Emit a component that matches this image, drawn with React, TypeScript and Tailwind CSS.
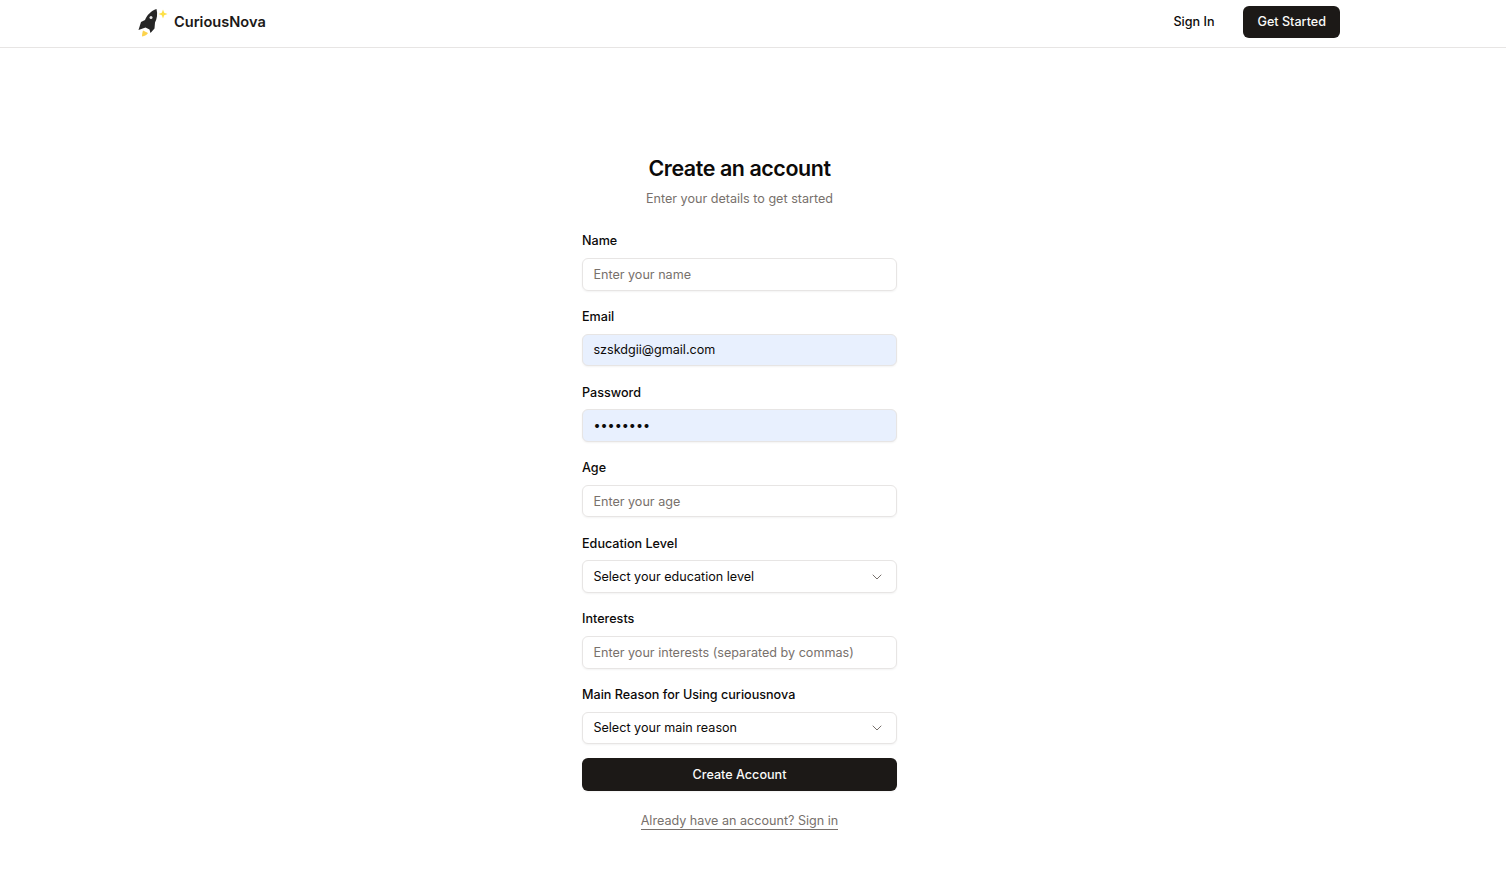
import { ChevronDown } from "lucide-react";

const inputBase =
  "h-[32.6px] w-full rounded-md border border-[#e7e5e4] px-[10.4px] text-[12.6px] shadow-[0_1px_2px_rgba(0,0,0,0.05)] outline-none";

const Logo = () => (
  <svg width="32" height="32" viewBox="0 0 32 32">
    <path d="M19.500 3C20.800 8 20 13 18 16.500L17.500 22.500L13.500 27L12.500 23.500L8.500 21.500L1.500 24L4 16L8 14C10 9 14 5 19.500 3z" fill="#262626" />
    <circle cx="14" cy="11.500" r="1.500" fill="#e5e5e5" />
    <path d="M6 24.500L11 27C10 29 8 30 5 30.500C5 28 5.500 26 6 24.500z" fill="#fcd34d" />
    <path d="M26 3.500l1.200 3.300 3.300 1.200-3.300 1.200-1.200 3.300-1.200-3.300-3.300-1.200 3.300-1.200z" fill="#fde047" />
  </svg>
);

const Field = ({ label, children }: { label: string; children: React.ReactNode }) => (
  <div className="flex flex-col gap-[6.6px]">
    <label className="pt-[1.4px] text-[12.6px] leading-5 font-medium text-[#0c0a09]">{label}</label>
    {children}
  </div>
);

const Select = ({ text }: { text: string }) => (
  <button type="button" className={`${inputBase} flex items-center justify-between bg-white pt-[1px] text-[#0c0a09]`}>
    <span>{text}</span>
    <ChevronDown className="mr-[1px] h-4 w-4 text-[#78716c]" strokeWidth={1.5} />
  </button>
);

export default function App() {
  return (
    <div className="min-h-[882px] bg-white font-['Inter',sans-serif] text-[#0c0a09]">
      <header className="h-[48px] border-b border-[#e7e5e4]">
        <div className="flex h-[44px] w-[1340px] items-center justify-between pl-[137px]">
          <div className="flex items-center gap-[5px]">
            <Logo />
            <span className="pt-[2px] text-[14.6px] font-semibold text-[#1c1917]">CuriousNova</span>
          </div>
          <div className="flex items-center gap-[15px]">
            <button className="px-[14px] text-[12.6px] font-medium">Sign In</button>
            <button className="h-[32px] rounded-md bg-[#1c1917] px-[14px] text-[12.6px] font-medium text-[#fafaf9]">
              Get Started
            </button>
          </div>
        </div>
      </header>
      <div className="w-[1340px] pl-[139px]">
        <main className="mx-auto w-[315px] pt-[104px]">
          <div className="text-center">
            <h1 className="text-[21.45px] leading-8 font-semibold tracking-[-0.02em]">Create an account</h1>
            <p className="mt-[5px] text-[12.6px] leading-5 text-[#78716c]">Enter your details to get started</p>
          </div>
          <form className="mt-[21.1px] flex flex-col gap-[15px]">
            <Field label="Name">
              <input className={`${inputBase} placeholder:text-[#78716c]`} placeholder="Enter your name" />
            </Field>
            <Field label="Email">
              <input className={`${inputBase} bg-[#e8f0fe]`} defaultValue="szskdgii@gmail.com" />
            </Field>
            <Field label="Password">
              <input className={`${inputBase} bg-[#e8f0fe]`} type="password" defaultValue="password" />
            </Field>
            <Field label="Age">
              <input className={`${inputBase} placeholder:text-[#78716c]`} placeholder="Enter your age" />
            </Field>
            <Field label="Education Level">
              <Select text="Select your education level" />
            </Field>
            <Field label="Interests">
              <input className={`${inputBase} placeholder:text-[#78716c]`} placeholder="Enter your interests (separated by commas)" />
            </Field>
            <Field label="Main Reason for Using curiousnova">
              <Select text="Select your main reason" />
            </Field>
            <button type="submit" className="-mt-[1px] h-[33px] w-full rounded-md bg-[#1c1917] pt-[2px] text-[12.6px] font-medium text-[#fafaf9] shadow-[0_1px_2px_rgba(0,0,0,0.05)]">
              Create Account
            </button>
          </form>
          <div className="mt-[16px] text-center">
            <a className="border-b border-[#78716c] pb-[1px] text-[12.6px] text-[#78716c]">Already have an account? Sign in</a>
          </div>
        </main>
      </div>
    </div>
  );
}
